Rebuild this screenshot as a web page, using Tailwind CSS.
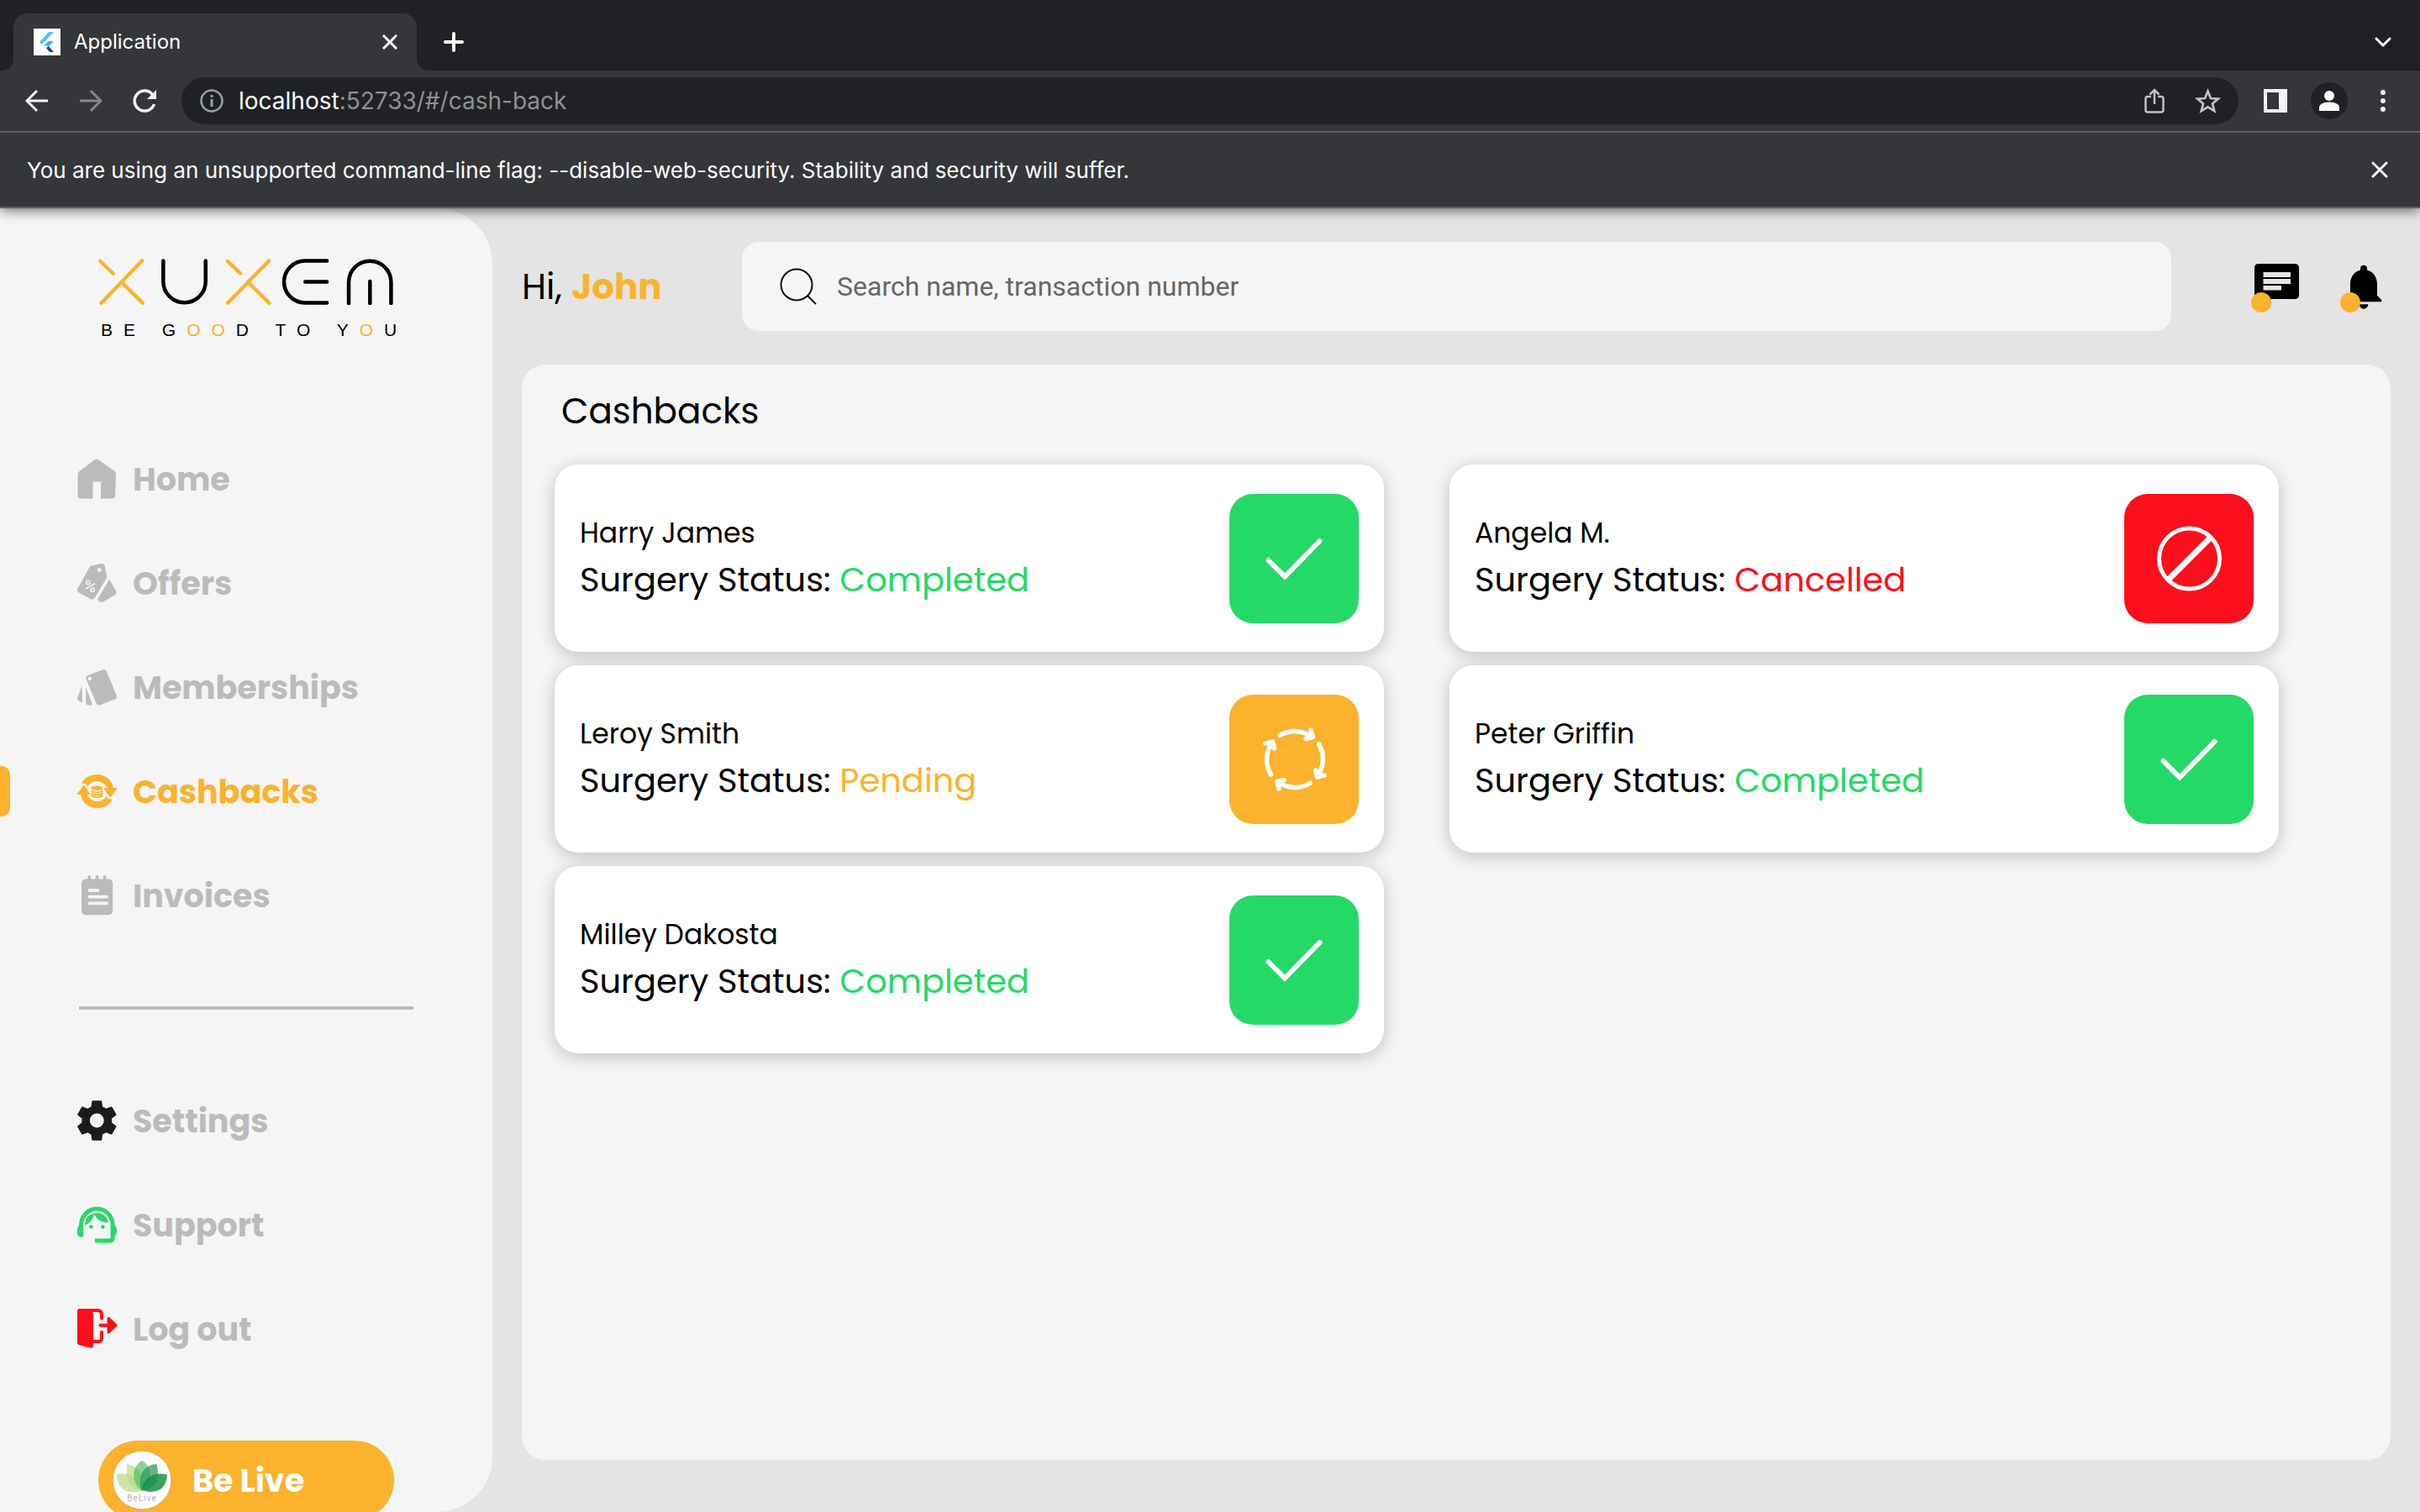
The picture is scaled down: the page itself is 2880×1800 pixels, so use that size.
<!DOCTYPE html>
<html lang="en">
<head>
<meta charset="utf-8">
<title>Application</title>
<script src="https://cdn.jsdelivr.net/npm/@tailwindcss/browser@4"></script>
</head>
<body class="flex h-screen flex-col overflow-hidden bg-[#e4e4e4] font-['Poppins',Inter,sans-serif] text-black">

<!-- Browser chrome -->
<header class="relative z-10 shrink-0 bg-[#35363a] font-[Inter,sans-serif] text-white shadow-[0_2px_14px_rgba(0,0,0,0.6)]">
  <div class="flex h-[84px] items-end bg-[#202124] pr-[30px]">
    <svg class="size-4 shrink-0" viewBox="0 0 16 16"><path fill="#35363a" d="M16 0v16H0Q16 16 16 0Z"/></svg>
    <div class="flex h-[68px] w-[480px] items-center rounded-t-2xl bg-[#35363a] pr-[23px] pl-6">
      <svg class="size-8" viewBox="0 0 32 32"><path fill="#fff" d="M0 0h32v32H0z"/><path fill="#54c5f8" d="m7 16 11-12h6L10 19z"/><path fill="#29b6f6" d="m12 20 6-5h6l-6 6z"/><path fill="#01579b" d="m15 23 3-2 6 7h-5z"/></svg>
      <span class="ml-4 flex-1 text-2xl">Application</span>
      <button aria-label="Close tab"><svg class="size-[18px]" viewBox="0 0 18 18"><path stroke="#fff" stroke-width="3" d="m1 1 16 16M17 1 1 17"/></svg></button>
    </div>
    <svg class="size-4 shrink-0" viewBox="0 0 16 16"><path fill="#35363a" d="M0 0v16h16Q0 16 0 0Z"/></svg>
    <button aria-label="New tab" class="ml-4 flex h-[68px] items-center"><svg class="size-6" viewBox="0 0 24 24"><path stroke="#fff" stroke-width="4" stroke-linecap="round" d="M12 2v20M2 12h20"/></svg></button>
    <div class="flex-1"></div>
    <button aria-label="Search tabs" class="flex h-[68px] items-center pr-1"><svg class="h-3 w-[20px]" viewBox="0 0 20 12" fill="none"><path stroke="#fff" stroke-width="3" stroke-linecap="round" stroke-linejoin="round" d="m2 2 8 8 8-8"/></svg></button>
  </div>
  <div class="flex h-[72px] items-center border-b-2 border-[#5f6063] box-content pr-9 pl-[30px]">
    <button aria-label="Back"><svg class="size-7" viewBox="0 0 28 28" fill="none" stroke="#f1f3f4" stroke-width="3"><path d="M27 14H3M14 2 2 14l12 12"/></svg></button>
    <button aria-label="Forward" class="ml-9"><svg class="size-7" viewBox="0 0 28 28" fill="none" stroke="#85868a" stroke-width="3"><path d="M1 14h24M14 2l12 12-12 12"/></svg></button>
    <button aria-label="Reload" class="ml-9"><svg class="size-7" viewBox="0 0 28 28" fill="none"><path stroke="#f1f3f4" stroke-width="3.500" d="M23.500 6.500A12 12 0 1 0 25.500 18"/><path fill="#f1f3f4" d="M28 1v11H17z"/></svg></button>
    <div class="ml-[30px] flex h-14 flex-1 items-center rounded-full bg-[#202124] pr-[13px] pl-[22px]">
      <svg class="size-7" viewBox="0 0 28 28"><circle cx="14" cy="14" r="12.500" fill="none" stroke="#9aa0a6" stroke-width="2.500"/><path stroke="#9aa0a6" stroke-width="3" d="M14 12v9M14 7v3"/></svg>
      <a href="#/cash-back" class="ml-[18px] flex-1 text-[28px] text-[#8e9093]"><span class="text-white">localhost</span>:52733/#/cash-back</a>
      <button aria-label="Share"><svg class="h-[30px] w-6" viewBox="0 0 24 30" fill="none" stroke="#c0c1c3" stroke-width="2.500"><path d="M8 10H4q-2.500 0-2.500 2.500V26q0 2.500 2.500 2.500h16q2.500 0 2.500-2.500V12.500Q22.500 10 20 10h-4M12 19V3M6.500 7.500 12 2l5.500 5.500"/></svg></button>
      <button aria-label="Bookmark" class="ml-[36px] mr-2"><svg class="size-[31px]" viewBox="0 0 30 30" fill="none"><path stroke="#c0c1c3" stroke-width="2.600" d="m15 3.500 3.300 8.100 8.700.6-6.700 5.600 2.200 8.500-7.500-4.700-7.500 4.700 2.200-8.500L3 12.200l8.700-.6z"/></svg></button>
    </div>
    <button aria-label="Side panel" class="ml-[30px]"><svg class="size-7" viewBox="0 0 28 28"><path fill="#f1f3f4" fill-rule="evenodd" d="M0 0h28v28H0zM4 4v20h14V4z"/></svg></button>
    <button aria-label="Profile" class="ml-7"><svg class="size-11" viewBox="0 0 44 44"><circle cx="22" cy="22" r="22" fill="#202124"/><circle cx="22" cy="16" r="6" fill="#fff"/><path fill="#fff" d="M10 34v-4q0-6 12-6.500 12 .5 12 6.500v4z"/></svg></button>
    <button aria-label="Menu" class="ml-[34px]"><svg class="h-7 w-4" viewBox="0 0 16 28" fill="#f1f3f4"><circle cx="8" cy="4" r="3"/><circle cx="8" cy="14" r="3"/><circle cx="8" cy="24" r="3"/></svg></button>
  </div>
  <div class="flex h-[90px] items-center justify-between border-b-2 border-[#5f6063] pr-[38px] pl-8">
    <p class="text-[26px]">You are using an unsupported command-line flag: --disable-web-security. Stability and security will suffer.</p>
    <button aria-label="Dismiss"><svg class="size-5" viewBox="0 0 20 20"><path stroke="#f1f3f4" stroke-width="3" stroke-linecap="round" d="m2 2 16 16M18 2 2 18"/></svg></button>
  </div>
</header>

<div class="flex min-h-0 flex-1">
  <!-- Sidebar -->
  <aside class="flex w-[586px] shrink-0 flex-col overflow-hidden rounded-r-[66px] bg-[#f5f5f5] pt-[60px]">
    <svg class="ml-[117px] h-[55px] w-[352px] shrink-0" viewBox="117 308 352 55" fill="none" stroke-width="4.500" stroke-linecap="round" role="img" aria-label="Xuxem">
      <path stroke="#fcb22c" d="m119.500 311 15 14.500M169 310.500l-48.500 50.200M144.600 336l25 24.700M271 311l15 14.500M320 310.500l-49 50.200M295.300 336l25 24.700"/>
      <path stroke="#000" d="M194.300 310.500V335a25.200 25.200 0 0 0 50.400 0V310.500M389 310.500h-26a25 25 0 0 0 0 50h26M363.200 335.500H389M415 361v-25a25.200 25.200 0 0 1 50.400 0v25M440.300 335v26"/>
    </svg>
    <p class="mt-5 ml-[120px] h-5 shrink-0 whitespace-nowrap font-['Liberation_Sans',sans-serif] text-[21px] leading-5 tracking-[13px]">BE G<span class="text-[#fcb22c]">OO</span>D TO Y<span class="text-[#fcb22c]">O</span>U</p>

    <nav class="mt-[105px] shrink-0 text-[38px] font-bold text-[#bbb]">
      <a href="#/home" class="flex h-[124px] items-center gap-[18px] pl-[92px]">
        <svg class="size-12" viewBox="0 -.5 48 48" fill="currentColor"><path d="M20.500 1a4 4 0 0 1 5 0L44.500 14.500q1.700 1.500 1.500 4L45 43.500q0 3.500-3.500 3.500H28V27H18.500v20H4q-3.500 0-3.500-3.500V18.500q0-2.500 2-4Z"/></svg>Home</a>
      <a href="#/offers" class="flex h-[124px] items-center gap-[18px] pl-[92px]">
        <svg class="size-12" viewBox="0 -1 48 48" fill="currentColor"><path d="M14.400 4.500q1-1.500 2.500-2L28.500 0q3.300-.3 4.300 3L35 14.500q.3 2-1 4L21 40.500q-1.700 3-5 1.800L2 34.500q-3-2-1.500-5z"/><path d="m38.100 18.700 8 14q1.300 2.600-1 4.300L31 45.500q-3 1-5.500-1-1.700-1.700-.5-3.700z"/><g fill="none" stroke="#f5f5f5" stroke-width="1.600"><circle cx="12.800" cy="22.400" r="2.200"/><circle cx="18" cy="31.200" r="2.200"/><path d="m10 30 11-6.400"/></g><circle cx="26.300" cy="7.500" r="2.400" fill="#f5f5f5"/></svg>Offers</a>
      <a href="#/memberships" class="flex h-[124px] items-center gap-[18px] pl-[92px]">
        <svg class="size-12" viewBox="0 -3 48 48" fill="currentColor"><path d="M12.500 7 30.500.3q3-1 4.400 2L46.700 31q1 3-1.500 4.200L27 42.300q-3 .7-4.500-2L10.400 11q-.7-3 2.100-4Z"/><path d="m10.200 21 8 21.500H14q-3.800 0-3.800-3zM5.600 19.500 6 39.400Q-.500 37.500 0 33.700z"/><circle cx="14.800" cy="11" r="2.200" fill="#f5f5f5"/></svg>Memberships</a>
      <a href="#/cash-back" aria-current="page" class="flex h-[124px] items-center text-[#fcb22c]">
        <span class="mr-20 h-[60px] w-3 rounded-r-[10px] bg-[#fcb22c]"></span>
        <svg class="mr-[18px] size-12" viewBox="0 -4 48 48" fill="currentColor"><g id="swap"><path d="M5 10.500C8.500 4 15.500 0 23.500 0 34 0 41.500 7 43 16h4q.2 1-.6 2l-6.200 8.400q-1 1.200-2 0L32.400 18q-.9-1.200-.2-2h3C33.500 11 28.500 8 23.500 8q-7 0-11 6C11 12 9.500 10 5 10.500z"/></g><use href="#swap" transform="rotate(180 23.500 20)"/><ellipse cx="23.500" cy="16.300" rx="7" ry="2.800"/><g fill="none" stroke="currentColor" stroke-width="1.800"><path d="M16.500 19q2 2.300 7 2.300t7-2.300M16.500 21.800q2 2.300 7 2.300t7-2.300M16.500 24.600q2 2.300 7 2.300t7-2.300"/></g></svg>Cashbacks</a>
      <a href="#/invoices" class="flex h-[124px] items-center gap-[18px] pl-[92px]">
        <svg class="size-12" viewBox="-5 0 48 48" fill="currentColor"><rect y="4.600" width="37.200" height="42.600" rx="5"/><g fill="none" stroke="currentColor" stroke-width="3.800" stroke-linecap="round"><path d="M9.200 2v4M18.500 2v4M27.700 2v4"/></g><g stroke="#f5f5f5" stroke-width="3.800" stroke-linecap="round"><path d="M9.500 18h10M9.500 25.700H30M9.500 33.400H30"/></g></svg>Invoices</a>
    </nav>

    <hr class="mt-[70px] mr-[94px] ml-[94px] shrink-0 border-t-4 border-[#bbb]">

    <nav class="mt-[70px] shrink-0 text-[38px] font-bold text-[#bbb]">
      <a href="#/settings" class="flex h-[124px] items-center gap-[18px] pl-[92px]">
        <svg class="size-12 text-[#1c1c1c]" viewBox="2.600 2.300 19.400 19.400" fill="currentColor"><path d="M19.140 12.940c.04-.3.06-.61.06-.94 0-.32-.02-.64-.07-.94l2.030-1.580a.49.49 0 0 0 .12-.61l-1.920-3.320a.488.488 0 0 0-.59-.22l-2.390.96c-.5-.38-1.030-.7-1.620-.94l-.36-2.540a.484.484 0 0 0-.48-.41h-3.840c-.24 0-.43.17-.47.41l-.36 2.540c-.59.24-1.130.57-1.620.94l-2.390-.96c-.22-.08-.47 0-.59.22L2.740 8.870c-.12.21-.08.47.12.61l2.030 1.580c-.05.3-.09.63-.09.94s.02.64.07.94l-2.030 1.580a.49.49 0 0 0-.12.61l1.920 3.320c.12.22.37.29.59.22l2.390-.96c.5.38 1.030.7 1.620.94l.36 2.540c.05.24.24.41.48.41h3.840c.24 0 .44-.17.47-.41l.36-2.540c.59-.24 1.130-.56 1.620-.94l2.390.96c.22.08.47 0 .59-.22l1.920-3.320c.12-.22.07-.47-.12-.61zM12 15.400a3.400 3.400 0 1 1 0-6.800 3.400 3.400 0 0 1 0 6.800z"/></svg>Settings</a>
      <a href="#/support" class="flex h-[124px] items-center gap-[18px] pl-[92px]">
        <svg class="size-12 text-[#25d966]" viewBox="0 -2.500 48 48" fill="currentColor"><path fill="none" stroke="currentColor" stroke-width="5" d="M4.500 30v-8a18.800 19.500 0 0 1 37.600 0v15q0 3.500-3.500 3.500H21"/><path d="M7 22v14H4.500Q0 36 0 31v-4q0-3 2-4.500zM42 21h2.500v1.500q2.500 1.500 2.500 4.500v3q0 3-2.500 4.500V36H42zM9 22C9 13 14 8 20.500 9.500 18 16 14 20.500 9 22ZM18 8.300C28 5.500 35 11 37 18.500 30 19.500 23.500 16 20.500 9.500Z"/><circle cx="16.300" cy="24" r="2.300"/><circle cx="30.300" cy="24" r="2.300"/></svg>Support</a>
      <a href="#/logout" class="flex h-[124px] items-center gap-[18px] pl-[92px]">
        <svg class="size-12 text-[#fc0f1c]" viewBox="0 0 48 48" fill="currentColor"><path d="M0 3q0-3 3-3h12l1.500 3.500Q19 4 19 7v36q0 4.500-4 3.500L3 43.500Q0 42.500 0 40z"/><path fill="none" stroke="currentColor" stroke-width="4" stroke-linecap="round" d="M4 2h20q5 0 5 5v4.500M29 28v7q0 4-4 4h-7M27.500 19.700H38"/><path d="M35.500 12q0-3.500 3-1.500l8 7.500q1.500 1.700 0 3.400l-8 7.500q-3 2-3-1.500z"/></svg>Log out</a>
    </nav>

    <button class="mt-[71px] ml-[117px] flex h-[94px] w-[352px] shrink-0 items-center gap-[25px] rounded-full bg-[#fcb22c] pl-[17px] text-[38px] font-bold text-white">
      <svg class="size-[70px]" viewBox="0 0 70 70"><circle cx="35" cy="35" r="34.700" fill="#fff" stroke="#b9a566" stroke-width=".6"/><path fill="#b5d984" opacity=".7" d="M5 28q12-2.500 21 4 9 6 8 16-5 1.500-10 1.500Q5 48 5 28Z"/><path fill="#b5d984" opacity=".65" d="M17 16q12 1 17 13 3 9 0 18-14-3-17-17-1-8 0-14Z"/><path fill="#4cb85a" opacity=".65" d="M35 11.500q10 7 10 17 0 11-10 20-10-9-10-20 0-10 10-17Z"/><path fill="#2c9c5e" opacity=".75" d="M52.500 16q-14 .5-19 14-2 9 1 17 17-1 19.500-16 .5-8-1.500-15Z"/><path fill="#158f45" opacity=".83" d="M65 28.500q-14-3-23 4-7 6-7 14.500 5 2 10 2 19-.5 20-20.500Z"/><text x="35" y="59.500" text-anchor="middle" font-family="Roboto, sans-serif" font-size="10" font-weight="400" letter-spacing="1" fill="#b4b4b4">BeLive</text></svg>
      Be Live
    </button>
  </aside>

  <main class="flex min-w-0 flex-1 flex-col pt-10 pr-[35px] pb-[62px] pl-[35px]">
    <div class="flex shrink-0 items-center">
      <h1 class="w-[262px] text-[42px]">Hi, <span class="font-bold text-[#fcb22c]">John</span></h1>
      <label class="flex h-[106px] flex-1 items-center rounded-[20px] bg-[#f5f5f5] pl-[45px]">
        <svg class="size-11" viewBox="0 0 44 44" fill="none" stroke="#111" stroke-width="2"><circle cx="20" cy="20" r="18.500"/><path d="m33 33 10 10"/></svg>
        <input type="search" aria-label="Search" placeholder="Search name, transaction number" class="ml-6 flex-1 bg-transparent font-[Roboto,sans-serif] text-[32px] outline-none placeholder:text-[#666]">
      </label>
      <button aria-label="Messages" class="relative ml-[99px] h-16 w-[53px]">
        <svg class="h-16 w-[53px]" viewBox="0 -5 53 64"><path fill-rule="evenodd" d="M5 0h43q5 0 5 5v32q0 5-5 5H10L0 52V5q0-5 5-5ZM10.500 10v6H43v-6zm0 8v6H43v-6zm0 8v5.500H32V26z"/></svg>
        <span class="absolute top-[39px] -left-1 size-6 rounded-full bg-[#fcb22c]"></span>
      </button>
      <button aria-label="Notifications" class="relative ml-[45px] size-16">
        <svg class="size-16" viewBox="0 0 24 24"><path d="M12 22c1.100 0 2-.9 2-2h-4c0 1.100.9 2 2 2zm6-6v-5c0-3.070-1.640-5.640-4.500-6.320V4a1.500 1.500 0 0 0-3 0v.68C7.630 5.360 6 7.920 6 11v5l-2 2v.8h16V18l-2-2z"/></svg>
        <span class="absolute top-[39px] left-1 size-6 rounded-full bg-[#fcb22c]"></span>
      </button>
    </div>

    <section class="mt-10 flex-1 rounded-[28px] bg-[#f5f5f5] pt-6 pr-[133px] pl-[39px]">
      <h2 class="pl-2 text-[42px] leading-[63px]">Cashbacks</h2>
      <ul class="mt-8 grid grid-cols-2 gap-x-[78px] gap-y-4">
        <li class="flex h-[223px] items-center justify-between rounded-[28px] bg-white px-[30px] shadow-[0_4px_20px_rgba(0,0,0,0.22)]">
          <div class="pt-[2px]"><h3 class="text-[33px] leading-[48px]">Harry James</h3><p class="text-[40px] leading-[62px]">Surgery Status: <span class="text-[#25d966]">Completed</span></p></div>
          <svg class="size-[154px] rounded-[28px] bg-[#25d966]" viewBox="0 0 154 154" fill="none" stroke="#fff" stroke-width="6" stroke-linecap="round"><path d="m46.500 79 19.500 19.500L107.500 56"/></svg>
        </li>
        <li class="flex h-[223px] items-center justify-between rounded-[28px] bg-white px-[30px] shadow-[0_4px_20px_rgba(0,0,0,0.22)]">
          <div class="pt-[2px]"><h3 class="text-[33px] leading-[48px]">Angela M.</h3><p class="text-[40px] leading-[62px]">Surgery Status: <span class="text-[#fc0f1c]">Cancelled</span></p></div>
          <svg class="size-[154px] rounded-[28px] bg-[#fc0f1c]" viewBox="0 0 154 154" fill="none" stroke="#fff" stroke-width="5"><circle cx="77.500" cy="77" r="36"/><path stroke-width="7" d="m52 102.500 51-51"/></svg>
        </li>
        <li class="flex h-[223px] items-center justify-between rounded-[28px] bg-white px-[30px] shadow-[0_4px_20px_rgba(0,0,0,0.22)]">
          <div class="pt-[2px]"><h3 class="text-[33px] leading-[48px]">Leroy Smith</h3><p class="text-[40px] leading-[62px]">Surgery Status: <span class="text-[#fcb22c]">Pending</span></p></div>
          <svg class="size-[154px] rounded-[28px] bg-[#fcb22c]" viewBox="0 0 154 154" fill="none" stroke="#fff" stroke-width="5.500" stroke-linecap="round" stroke-linejoin="round"><g id="arc"><path d="M60 48.500Q77 38.500 96 48.500M97 42l2.200 8.500L91 52.500"/></g><use href="#arc" transform="rotate(90 78 77)"/><use href="#arc" transform="rotate(180 78 77)"/><use href="#arc" transform="rotate(270 78 77)"/></svg>
        </li>
        <li class="flex h-[223px] items-center justify-between rounded-[28px] bg-white px-[30px] shadow-[0_4px_20px_rgba(0,0,0,0.22)]">
          <div class="pt-[2px]"><h3 class="text-[33px] leading-[48px]">Peter Griffin</h3><p class="text-[40px] leading-[62px]">Surgery Status: <span class="text-[#25d966]">Completed</span></p></div>
          <svg class="size-[154px] rounded-[28px] bg-[#25d966]" viewBox="0 0 154 154" fill="none" stroke="#fff" stroke-width="6" stroke-linecap="round"><path d="m46.500 79 19.500 19.500L107.500 56"/></svg>
        </li>
        <li class="flex h-[223px] items-center justify-between rounded-[28px] bg-white px-[30px] shadow-[0_4px_20px_rgba(0,0,0,0.22)]">
          <div class="pt-[2px]"><h3 class="text-[33px] leading-[48px]">Milley Dakosta</h3><p class="text-[40px] leading-[62px]">Surgery Status: <span class="text-[#25d966]">Completed</span></p></div>
          <svg class="size-[154px] rounded-[28px] bg-[#25d966]" viewBox="0 0 154 154" fill="none" stroke="#fff" stroke-width="6" stroke-linecap="round"><path d="m46.500 79 19.500 19.500L107.500 56"/></svg>
        </li>
      </ul>
    </section>
  </main>
</div>
</body>
</html>
